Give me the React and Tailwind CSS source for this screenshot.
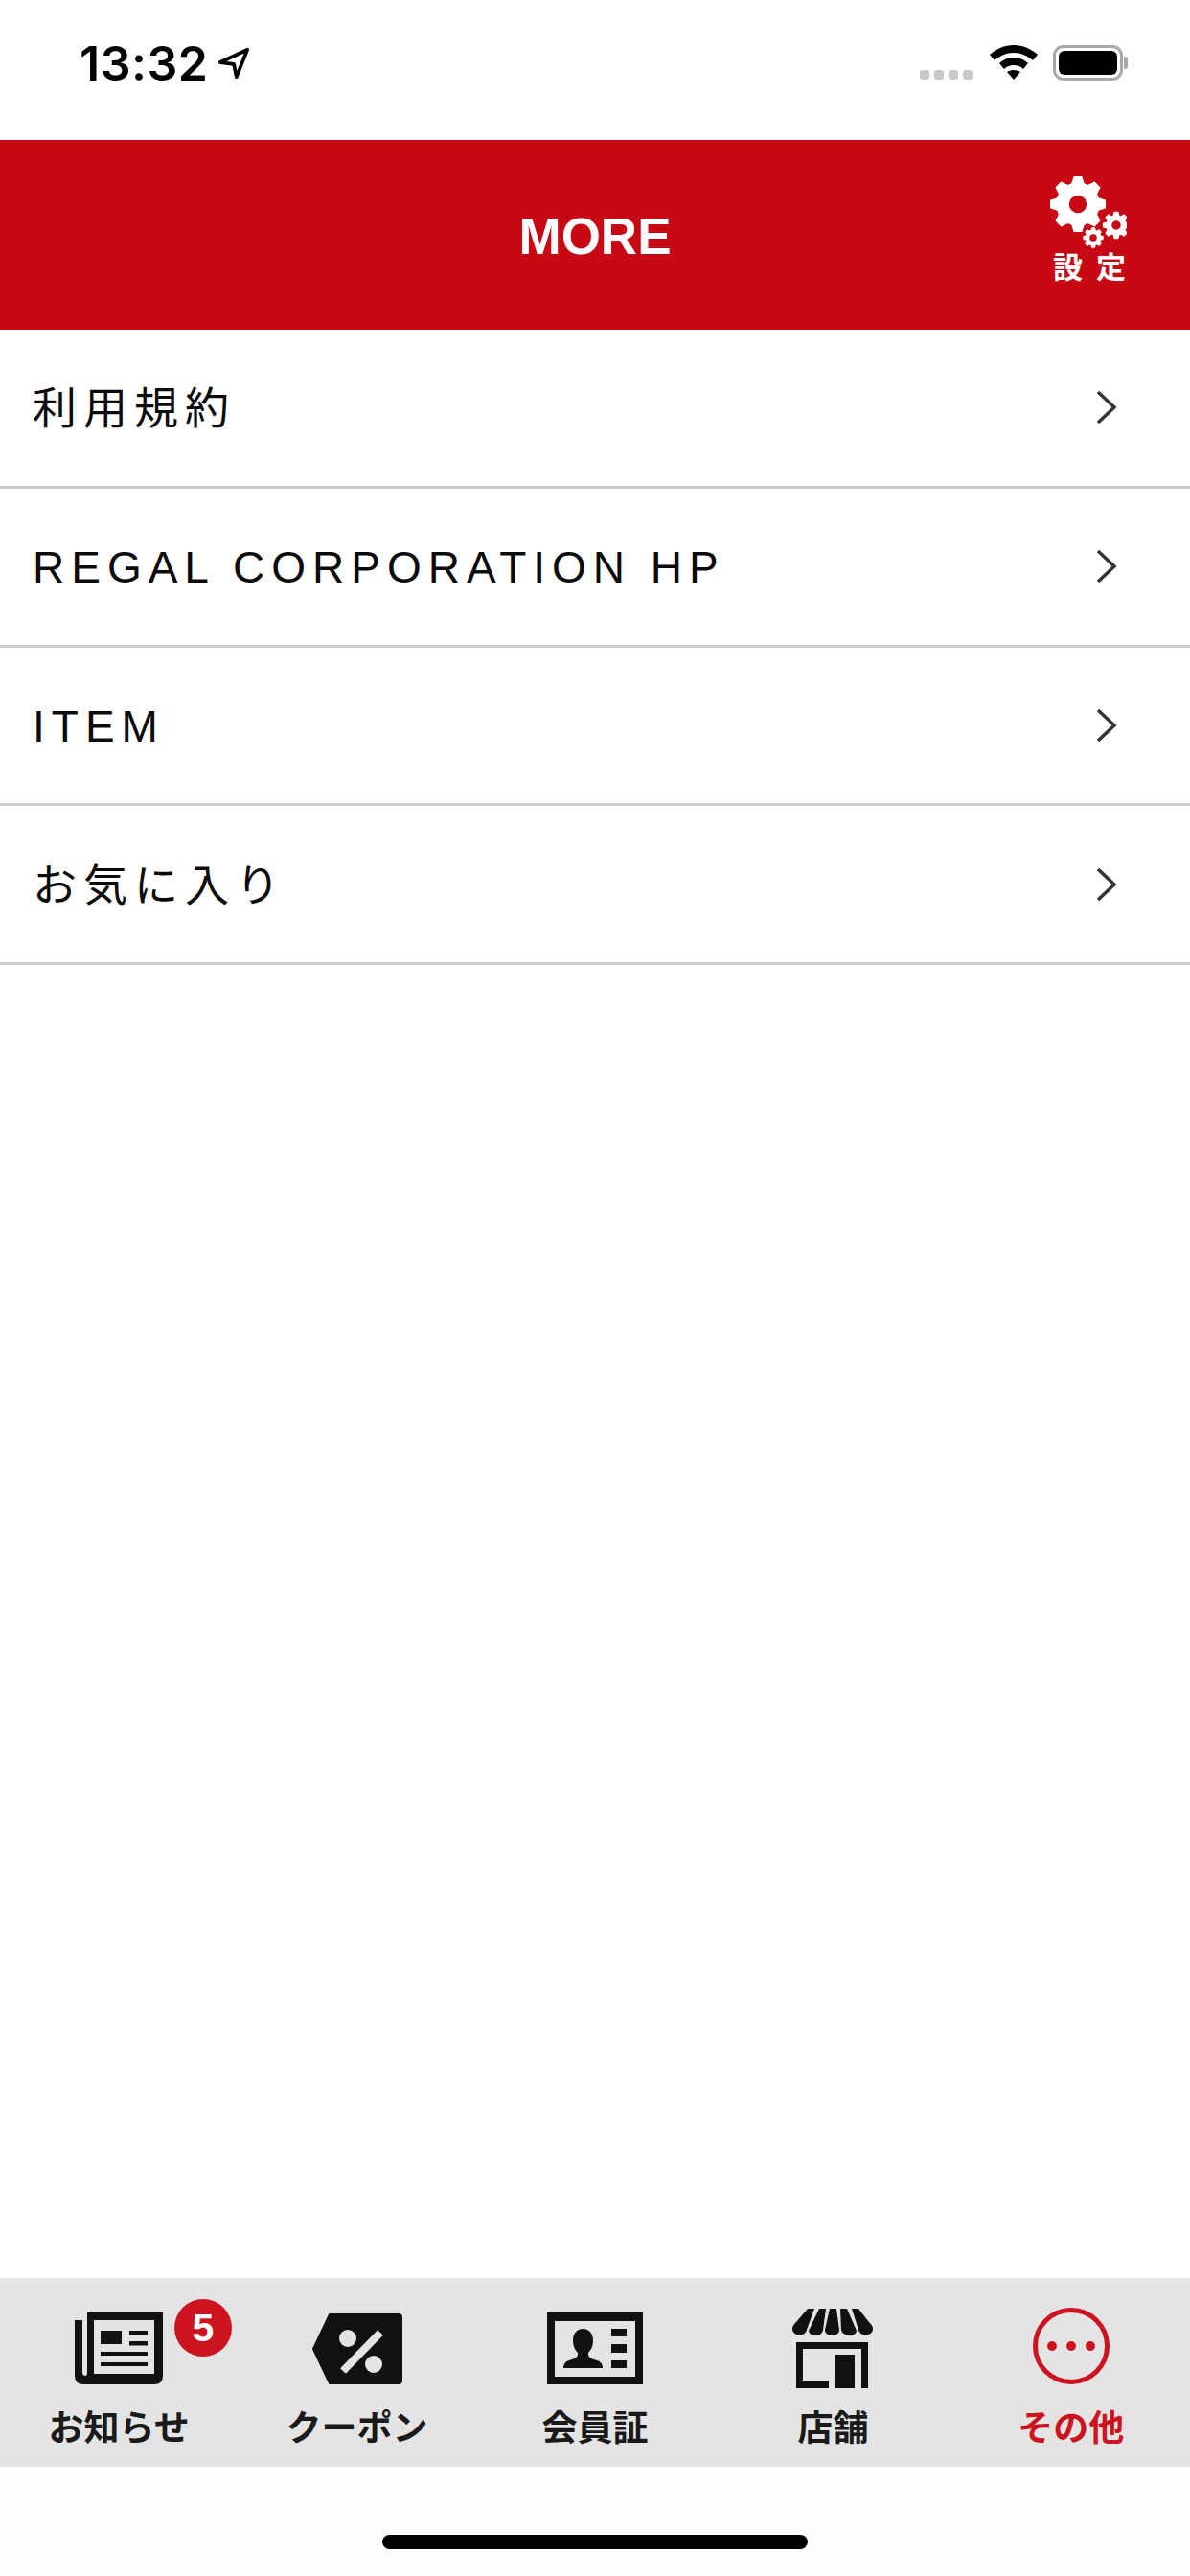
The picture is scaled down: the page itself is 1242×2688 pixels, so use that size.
import React from "react";

const SANS = "font-['Liberation_Sans','Noto_Sans_CJK_JP',sans-serif]";

// builds a cog outline with trapezoid teeth
function gearPath(cx, cy, outer, inner, hole, teeth) {
  const pts = [];
  const step = (Math.PI * 2) / teeth;
  for (let i = 0; i < teeth; i++) {
    const a = i * step - Math.PI / 2;
    pts.push([a - step * 0.36, inner], [a - step * 0.17, outer], [a + step * 0.17, outer], [a + step * 0.36, inner]);
  }
  const ring = pts
    .map(([a, r], i) => `${i === 0 ? "M" : "L"}${(cx + r * Math.cos(a)).toFixed(2)} ${(cy + r * Math.sin(a)).toFixed(2)}`)
    .join(" ");
  return `${ring} Z M${cx - hole} ${cy} a${hole} ${hole} 0 1 0 ${hole * 2} 0 a${hole} ${hole} 0 1 0 ${-hole * 2} 0 Z`;
}

function SettingsIcon() {
  return (
    <div className="flex flex-col items-center w-[84px]">
      <svg width="84" height="78" viewBox="0 0 84 78" fill="#fff" stroke="#fff" strokeWidth="1.5" strokeLinejoin="round">
        <path fillRule="evenodd" d={gearPath(33, 30, 28.5, 22, 10, 8)} />
        <path fillRule="evenodd" d={gearPath(73, 52, 13.5, 10, 5.5, 8)} />
        <path fillRule="evenodd" d={gearPath(49, 65, 10, 7.5, 4.5, 8)} />
      </svg>
      <span className={`${SANS} mt-[3px] ml-[6px] text-[31px] leading-[32px] font-bold text-white tracking-[14px] pl-[14px] whitespace-nowrap`}>設定</span>
    </div>
  );
}

function Chevron() {
  return (
    <svg width="24" height="36" viewBox="0 0 24 36" fill="none" stroke="#333" strokeWidth="3.5">
      <path d="M3 2 L20 18 L3 34" />
    </svg>
  );
}

function NewsIcon() {
  return (
    <svg width="92" height="75" viewBox="0 0 92 75" fill="#111">
      <path fillRule="evenodd" d="M13 0 H92 V66 Q92 75 83 75 H9 Q0 75 0 66 V8 H8 V62 Q8 66 11 66 Q13 66 13 62 Z M20 8 V64 H83 V8 Z" />
      <rect x="27" y="19" width="22" height="14" />
      <rect x="57" y="19" width="19" height="4.5" />
      <rect x="57" y="30" width="19" height="4.5" />
      <rect x="27" y="41" width="49" height="4" />
      <rect x="27" y="52" width="49" height="4" />
    </svg>
  );
}

function CouponIcon() {
  return (
    <svg width="94" height="74" viewBox="0 0 94 74">
      <path d="M18 1 H90 Q93 1 93 4 V70 Q93 73 90 73 H18 L1 37 Z" fill="#111" stroke="#111" strokeWidth="2" strokeLinejoin="round" />
      <circle cx="37" cy="26" r="9" fill="#e4e4e4" />
      <circle cx="64" cy="53" r="9" fill="#e4e4e4" />
      <path d="M71 20 L32 60" stroke="#e4e4e4" strokeWidth="8" />
    </svg>
  );
}

function CardIcon() {
  return (
    <svg width="100" height="75" viewBox="0 0 100 75" fill="#111">
      <path fillRule="evenodd" d="M0 0 H100 V75 H0 Z M8 9 V67 H92 V9 Z" />
      <path d="M37.5 17 C44 17 48 22 48 29 C48 35 46 39 43 42 V44 C43 47 48 49 52 50 C56 51 58 54 58 58 H17 C17 54 19 51 23 50 C27 49 32 47 32 44 V42 C29 39 27 35 27 29 C27 22 31 17 37.5 17 Z" />
      <rect x="67" y="17" width="16" height="8" />
      <rect x="67" y="33" width="16" height="9" />
      <rect x="67" y="50" width="16" height="8" />
    </svg>
  );
}

function StoreIcon() {
  return (
    <svg width="84" height="83" viewBox="0 0 84 83" fill="#111">
      <path d="M16 0 H23 L15 22 C13 30 0 29 0 21 C0 18 2 16 4 14 Z" />
      <path d="M28 0 H35 L32 22 C31 30 18 30 17 23 Z" />
      <path d="M39 0 H46 L49 22 C49 30 34 30 34 22 Z" />
      <path d="M50 0 H57 L67 23 C66 30 53 30 51 22 Z" />
      <path d="M62 0 H69 L80 14 C82 16 84 18 84 21 C84 29 71 30 69 22 Z" />
      <path d="M4 35 H79 V83 H72 V42 H11 V75 H38 V83 H4 Z" />
      <rect x="45" y="48" width="20" height="35" />
    </svg>
  );
}

function MoreIcon() {
  return (
    <svg width="80" height="80" viewBox="0 0 80 80" fill="#cc1421" className="mb-[5px]">
      <circle cx="40" cy="40" r="37.5" fill="none" stroke="#cc1421" strokeWidth="5" />
      <circle cx="20" cy="40" r="5" />
      <circle cx="40" cy="40" r="5" />
      <circle cx="60" cy="40" r="5" />
    </svg>
  );
}

const rows = ["利用規約", "REGAL CORPORATION HP", "ITEM", "お気に入り"];

const tabs = [
  { label: "お知らせ", icon: <NewsIcon />, badge: 5 },
  { label: "クーポン", icon: <CouponIcon /> },
  { label: "会員証", icon: <CardIcon /> },
  { label: "店舗", icon: <StoreIcon /> },
  { label: "その他", icon: <MoreIcon />, active: true },
];

export default function App() {
  return (
    <div className={`${SANS} w-[1242px] h-[2688px] bg-white flex flex-col overflow-hidden`}>
      {/* status bar */}
      <div className="h-[146px] shrink-0 flex items-start justify-between pl-[83px] pr-[65px] pt-[41px]">
        <div className="flex items-center gap-[10px]">
          <span className="font-['Inter',sans-serif] text-[50px] leading-[50px] font-semibold tracking-[0.5px] text-black">13:32</span>
          <svg width="34" height="34" viewBox="0 0 36 36" fill="none" stroke="#000" strokeWidth="4" strokeLinejoin="round">
            <path d="M33 3 L3 17 L18 19 L21 33 Z" />
          </svg>
        </div>
        <div className="flex items-start pt-[6px]">
          <div className="flex gap-[5px] mt-[26px] mr-[18px]">
            <span className="w-[10px] h-[10px] rounded-[3px] bg-[#c8c8c8]" />
            <span className="w-[10px] h-[10px] rounded-[3px] bg-[#c8c8c8]" />
            <span className="w-[10px] h-[10px] rounded-[3px] bg-[#c8c8c8]" />
            <span className="w-[10px] h-[10px] rounded-[3px] bg-[#c8c8c8]" />
          </div>
          <svg width="50" height="36" viewBox="0 0 50 36" className="mr-[16px]">
            <path d="M25 0 C35 0 43 4 50 10 L45 16 C39 11 33 8 25 8 C17 8 11 11 5 16 L0 10 C7 4 15 0 25 0 Z" />
            <path d="M25 13 C31 13 36 15 40 19 L35 25 C32 22 29 21 25 21 C21 21 18 22 15 25 L10 19 C14 15 19 13 25 13 Z" />
            <path d="M25 26 C28 26 30 27 32 28 L25 36 L18 28 C20 27 22 26 25 26 Z" />
          </svg>
          <div className="flex items-center">
            <div className="w-[73px] h-[37px] rounded-[11px] border-[3px] border-[#a8a8a8] p-[3px]">
              <div className="w-full h-full rounded-[6px] bg-black" />
            </div>
            <div className="w-[4px] h-[13px] ml-[1px] rounded-r-[3px] bg-[#a8a8a8]" />
          </div>
        </div>
      </div>

      {/* header */}
      <div className="relative h-[198px] shrink-0 bg-[#c70815] flex items-center justify-center">
        <h1 className="text-[53px] leading-none font-bold text-white pt-[2px]">MORE</h1>
        <div className="absolute right-[66px] top-[37px]">
          <SettingsIcon />
        </div>
      </div>

      {/* menu */}
      <ul className="shrink-0">
        {rows.map((row) => (
          <li key={row} className="h-[165.75px] flex items-center justify-between pl-[34px] pr-[75px] border-b-[3px] border-[#cdcdcd]">
            <span className="text-[46px] tracking-[7px] text-[#0a0a0a] whitespace-nowrap pt-[3px]">{row}</span>
            <Chevron />
          </li>
        ))}
      </ul>

      <div className="flex-1" />

      {/* tab bar */}
      <nav className="h-[197px] shrink-0 bg-[#e4e4e4] grid grid-cols-5 pt-[31px]">
        {tabs.map((tab) => (
          <div key={tab.label} className="relative flex flex-col items-center">
            <div className="h-[85px] flex items-center justify-center">{tab.icon}</div>
            {tab.badge && (
              <span className="absolute left-[182px] top-[-9px] w-[60px] h-[60px] rounded-full bg-[#cc1421] text-white text-[41px] leading-[60px] font-bold text-center">
                {tab.badge}
              </span>
            )}
            <span className={`mt-[20px] text-[37px] leading-[44px] font-bold ${tab.active ? "text-[#cc1421]" : "text-[#1a1a1a]"}`}>
              {tab.label}
            </span>
          </div>
        ))}
      </nav>

      {/* home indicator */}
      <div className="h-[114px] shrink-0 bg-[#fefefe] flex justify-center pt-[71px]">
        <div className="w-[444px] h-[15px] rounded-full bg-black" />
      </div>
    </div>
  );
}
